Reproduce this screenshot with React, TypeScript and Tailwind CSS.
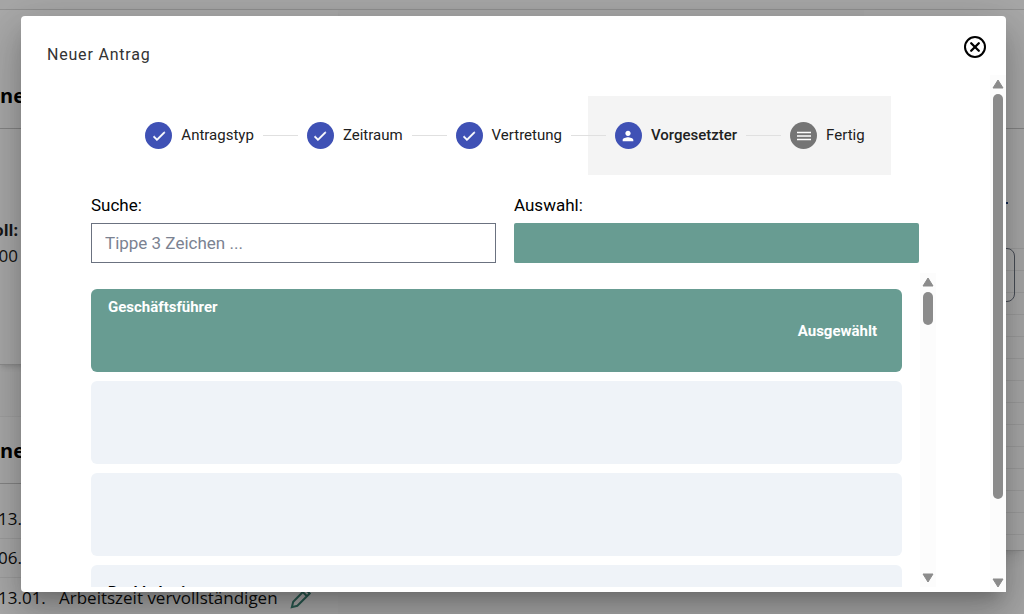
import clsx from "clsx";

const steps = [
  { label: "Antragstyp", state: "done" },
  { label: "Zeitraum", state: "done" },
  { label: "Vertretung", state: "done" },
  { label: "Vorgesetzter", state: "current" },
  { label: "Fertig", state: "open" },
];

const iconPaths: Record<string, string> = {
  done: "M9 16.17 4.83 12l-1.42 1.41L9 19 21 7l-1.41-1.41z",
  current:
    "M12 12c2.21 0 4-1.79 4-4s-1.79-4-4-4-4 1.79-4 4 1.79 4 4 4zm0 2c-2.67 0-8 1.34-8 4v2h16v-2c0-2.66-5.33-4-8-4z",
  open: "M1.500 18.500h21V16h-21zm0-5.250h21v-2.500h-21zm0-7.750V8h21V5.500z",
};

const people = [
  { id: 1, role: "Geschäftsführer", selected: true },
  { id: 2, role: "", selected: false },
  { id: 3, role: "", selected: false },
  { id: 4, role: "Buchhalterin", selected: false },
];

function StepIcon({ state }: { state: string }) {
  return (
    <span
      className={clsx(
        "flex size-[27px] shrink-0 items-center justify-center rounded-full text-white",
        state === "open" ? "bg-[#757575]" : "bg-[#3f51b5]",
      )}
    >
      <svg
        viewBox="0 0 24 24"
        className="size-4"
        fill="currentColor"
        stroke="currentColor"
        strokeWidth={state === "done" ? 1 : 0}
      >
        <path d={iconPaths[state]} />
      </svg>
    </span>
  );
}

function Stepper() {
  return (
    <ol className="mx-auto flex h-[79px] w-fit items-center">
      {steps.map((step, i) => (
        <li
          key={step.label}
          className={clsx("flex h-full items-center", i > 2 && "bg-[#f4f4f4]")}
        >
          {i > 0 && (
            <span
              className={clsx(
                "h-px w-[35px] bg-[#e0e0e0]",
                i === 3 && "-ml-[17px]",
              )}
            />
          )}
          <button
            className={clsx(
              "flex items-center gap-[9px] px-[9px] text-[15px] text-[#212121]",
              step.state === "current" && "font-medium",
              i === 0 && "pl-[26px]",
              (i === 2 || i === 4) && "pr-[26px]",
            )}
          >
            <StepIcon state={step.state} />
            {step.label}
          </button>
        </li>
      ))}
    </ol>
  );
}

function Scrollbar({ thumb }: { thumb: string }) {
  return (
    <div className="flex w-4 shrink-0 flex-col items-center bg-[#fcfcfc] py-1">
      <svg viewBox="0 0 12 10" className="h-[10px] w-3" fill="#8b8b8b">
        <path d="M6 1 11 9H1z" stroke="#8b8b8b" strokeLinejoin="round" />
      </svg>
      <div className={clsx("mt-[5px] w-[10px] rounded-full bg-[#8b8b8b]", thumb)} />
      <svg viewBox="0 0 12 10" className="mt-auto h-[10px] w-3" fill="#8b8b8b">
        <path d="M6 9 11 1H1z" stroke="#8b8b8b" strokeLinejoin="round" />
      </svg>
    </div>
  );
}

function PersonList() {
  return (
    <div className="flex min-h-0 flex-1">
      <ul className="mt-4 flex-1 space-y-[9px] overflow-hidden">
        {people.map((person) => (
          <li
            key={person.id}
            className={clsx(
              "h-[83px] rounded-md px-[17px] text-[15px] leading-6 font-bold",
              person.selected
                ? "bg-[#689c92] py-[6px] text-white"
                : "bg-[#eff3f8] py-[15px] text-black",
            )}
          >
            <p>{person.role}</p>
            {person.selected && <p className="pr-2 text-right">Ausgewählt</p>}
          </li>
        ))}
      </ul>
      <div className="ml-[18px] flex">
        <Scrollbar thumb="h-[33px]" />
      </div>
    </div>
  );
}

function Dialog() {
  return (
    <div
      role="dialog"
      aria-labelledby="dialog-title"
      className="flex flex-1 flex-col rounded bg-white font-[Roboto,sans-serif] shadow-[0_11px_15px_-7px_rgba(0,0,0,0.2),0_24px_38px_3px_rgba(0,0,0,0.14),0_9px_46px_8px_rgba(0,0,0,0.12)]"
    >
      <header className="flex h-[59px] shrink-0 justify-between pt-[18px] pr-[19px] pl-[26px]">
        <h1
          id="dialog-title"
          className="pt-[9px] text-base leading-6 tracking-wider text-[#333]"
        >
          Neuer Antrag
        </h1>
        <button aria-label="Schließen" className="self-start">
          <svg
            viewBox="0 0 24 24"
            className="size-6"
            fill="none"
            stroke="#000"
            strokeWidth="2"
          >
            <circle cx="12" cy="13" r="10" />
            <path
              d="m8.200 9.200 7.600 7.600m0-7.600-7.600 7.600"
              strokeWidth="2.300"
              strokeLinecap="round"
            />
          </svg>
        </button>
      </header>
      <div className="flex min-h-0 flex-1">
        <div className="mb-[5px] flex flex-1 flex-col pt-[21px] pl-[70px]">
          <div className="pr-[71px]">
            <Stepper />
          </div>
          <div className="mt-[18px] grid grid-cols-2 gap-[18px] pr-[71px] text-[17px] leading-6 text-black">
            <div>
              <label htmlFor="suche">Suche:</label>
              <input
                id="suche"
                type="text"
                placeholder="Tippe 3 Zeichen ..."
                className="mt-[6px] block h-10 w-full border border-[#6b7280] px-[13px] placeholder:text-[#7b8291]"
              />
            </div>
            <div>
              <label htmlFor="auswahl">Auswahl:</label>
              <input
                id="auswahl"
                type="text"
                readOnly
                className="mt-[6px] block h-10 w-full rounded-xs bg-[#689c92]"
              />
            </div>
          </div>
          <div className="mt-[10px] flex min-h-0 flex-1 pr-[54px]">
            <PersonList />
          </div>
        </div>
        <Scrollbar thumb="h-[405px]" />
      </div>
    </div>
  );
}

function Dashboard() {
  return (
    <div className="flex h-full flex-col overflow-hidden bg-[#f7f7f7] font-['Open_Sans',sans-serif] text-[17px] text-[#111]">
      <div className="h-[10px] shrink-0 border-b border-[#d6d6d6]" />
      <div className="flex flex-1 justify-between">
        <div className="w-[338px]">
          <section className="h-[355px] border-b border-[#d0d0d0] bg-[#fafafa] shadow-md">
            <h2 className="flex h-[119px] items-end border-b border-[#c4c4c4] pb-[18px] text-[20px] leading-7 font-bold text-black">
              ne
            </h2>
            <div className="mt-[89px] flex w-[18px] flex-col items-end">
              <p className="text-base leading-6 font-bold text-[#222]">oll:</p>
              <p className="leading-7 text-[#222]">00</p>
            </div>
          </section>
          <section className="mt-[51px] border-t border-[#ececec] bg-[#f9f9f9]">
            <h2 className="flex h-[67px] items-end border-b border-[#c4c4c4] pb-[18px] text-[20px] leading-7 font-bold text-black">
              ne
            </h2>
            <ul className="-ml-0.5 pt-4">
              <li className="h-[39px] border-b border-[#e8e8e8] leading-[38px]">
                13.
              </li>
              <li className="h-[39px] border-b border-[#e8e8e8] leading-[38px]">
                06.
              </li>
              <li className="flex h-10 items-center border-b border-[#e8e8e8]">
                <span className="w-[61px]">13.01.</span>
                Arbeitszeit vervollständigen
                <svg
                  viewBox="0 0 24 24"
                  className="ml-3 size-[22px]"
                  fill="none"
                  stroke="#3d8577"
                  strokeWidth="2.200"
                >
                  <path d="m2 22 1.500-6L17 2.500l4.500 4.500L8 20.500zM14 5.500l4.500 4.500" />
                </svg>
              </li>
            </ul>
          </section>
        </div>
        <div className="h-[541px] w-40 border-b border-[#ccc] bg-[#fafafa] shadow-lg">
          <div className="h-[119px] border-b border-[#c4c4c4]" />
          <div className="flex h-[119px] pt-[73px] pr-4">
            <span className="ml-auto size-0.5 bg-[#1d3d7a]" />
          </div>
          <div className="relative">
            {Array.from({ length: 14 }, (_, i) => (
              <div key={i} className="h-[22px] border-t border-[#e8e8e8]" />
            ))}
            <div className="absolute top-0 right-[9px] left-0 h-[54px] rounded-lg border border-[#6b7280]" />
          </div>
        </div>
      </div>
    </div>
  );
}

export default function App() {
  return (
    <main className="relative h-screen overflow-hidden">
      <Dashboard />
      <div className="absolute inset-0 flex bg-black/32 pt-4 pr-[18px] pb-[22px] pl-[21px]">
        <Dialog />
      </div>
    </main>
  );
}
